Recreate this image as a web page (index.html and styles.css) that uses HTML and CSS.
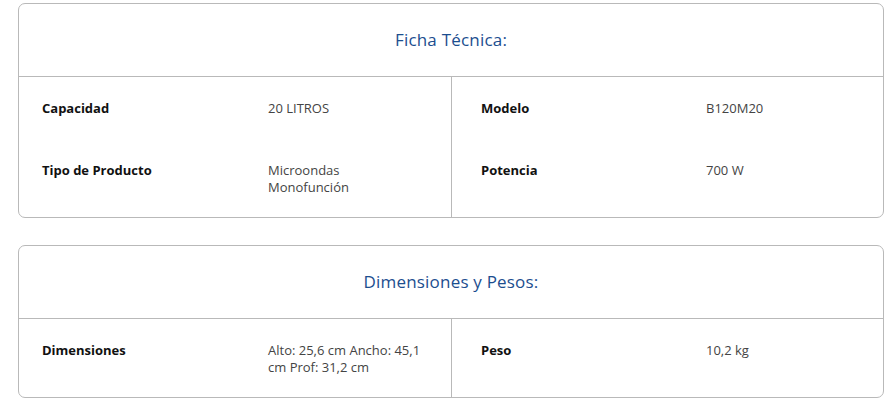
FILE: index.html
```html
<!DOCTYPE html>
<html lang="es">
<head>
<meta charset="utf-8">
<title>Ficha Técnica</title>
<link rel="stylesheet" href="styles.css">
</head>
<body>
<main class="page">
  <section class="card">
    <h2 class="card-title">Ficha Técnica:</h2>
    <div class="card-body">
      <div class="half half-left">
        <div class="row"><span class="label">Capacidad</span><span class="value">20 LITROS</span></div>
        <div class="row"><span class="label">Tipo de Producto</span><span class="value">Microondas Monofunción</span></div>
      </div>
      <div class="half half-right">
        <div class="row"><span class="label">Modelo</span><span class="value">B120M20</span></div>
        <div class="row"><span class="label">Potencia</span><span class="value">700 W</span></div>
      </div>
    </div>
  </section>
  <section class="card">
    <h2 class="card-title">Dimensiones y Pesos:</h2>
    <div class="card-body">
      <div class="half half-left">
        <div class="row"><span class="label">Dimensiones</span><span class="value">Alto: 25,6 cm Ancho: 45,1 cm Prof: 31,2 cm</span></div>
      </div>
      <div class="half half-right">
        <div class="row"><span class="label">Peso</span><span class="value">10,2 kg</span></div>
      </div>
    </div>
  </section>
</main>
</body>
</html>
```
FILE: styles.css
```css
html, body {
  margin: 0;
  padding: 0;
  background: #ffffff;
}
body {
  font-family: "Open Sans", "Liberation Sans", sans-serif;
  color: #222;
}
.page {
  padding: 3px 8px 0 18px;
  display: flex;
  flex-direction: column;
  gap: 27px;
  width: 866px;
}
.card {
  border: 1px solid #b9b9b9;
  border-radius: 7px;
  overflow: hidden;
}
.card-title {
  margin: 0;
  height: 70px;
  padding-bottom: 2px;
  display: flex;
  align-items: center;
  justify-content: center;
  font-size: 17px;
  letter-spacing: 0.2px;
  font-weight: 400;
  color: #1c4e8f;
  border-bottom: 1px solid #b9b9b9;
}
.card-body {
  display: grid;
  grid-template-columns: 432px 1fr;
}
.half {
  padding: 23px 24px 21px 23px;
  display: flex;
  flex-direction: column;
  gap: 45px;
}
.half-right {
  border-left: 1px solid #b9b9b9;
  padding-left: 29px;
}
.row {
  display: grid;
  grid-template-columns: 226px 154px;
  font-size: 13px;
  line-height: 17px;
  min-height: 17px;
}
.half-right .row {
  grid-template-columns: 225px 154px;
}
.label {
  font-weight: 700;
  color: #111;
}
.value {
  color: #444;
}
```
